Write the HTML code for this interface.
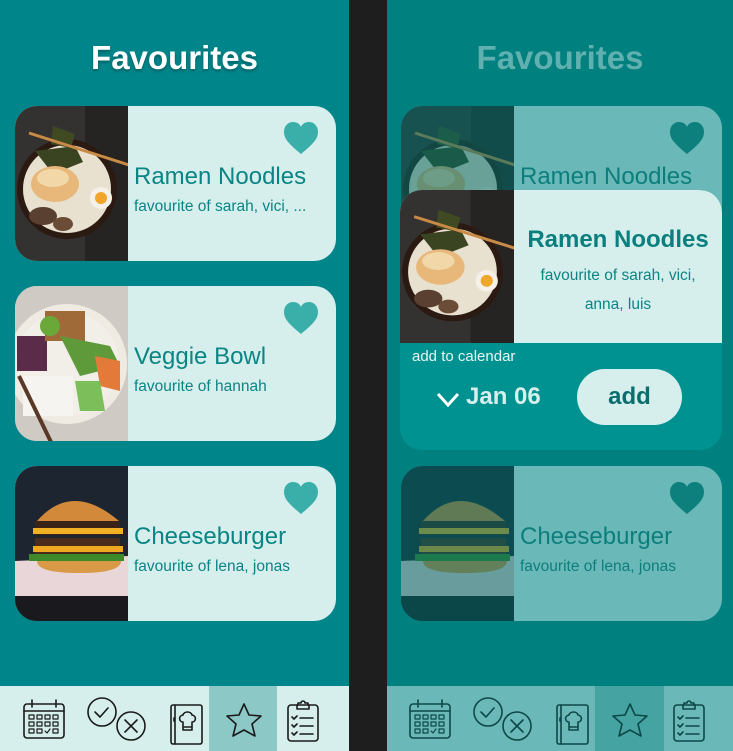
<!DOCTYPE html>
<html><head><meta charset="utf-8"><style>
*{margin:0;padding:0;box-sizing:border-box}
body{width:733px;height:751px;overflow:hidden;background:#1e1e1e;font-family:"Liberation Sans",sans-serif;position:relative}
.panel{position:absolute;top:0;height:751px}
#L{left:0;width:349px;background:#00868a}
#R{left:387px;width:346px;background:#00807f}
h1{position:absolute;top:39px;width:100%;text-align:center;font-size:33px;font-weight:bold;color:#fff;text-shadow:0 2px 3px rgba(0,0,0,.3)}
.card{position:absolute;width:321px;height:155px;border-radius:22px;background:#d6efed;overflow:hidden}
.card .img{position:absolute;left:0;top:0;width:113px;height:155px}
.card .t{position:absolute;left:119px;top:57px;font-size:24px;color:#0a8584;white-space:nowrap}
.card .s{position:absolute;left:119px;top:92px;font-size:15.5px;color:#0a8584;white-space:nowrap}
.card .h{position:absolute;left:268px;top:16px}
.nav{position:absolute;left:0;top:686px;width:100%;height:65px;background:#d6efed}
.dim{background:#6ab8b7}
.dim .t,.dim .s{color:#0c7f7d}
.shade{position:absolute;inset:0;background:rgba(0,110,108,.55)}
</style></head><body>
<svg width="0" height="0" style="position:absolute">
<defs>
<g id="ramen">
<rect width="113" height="155" fill="#343230"/>
<rect x="70" width="43" height="155" fill="#262422"/>
<circle cx="52" cy="83" r="50" fill="#2b1a12"/>
<circle cx="52" cy="83" r="44" fill="#e9e1cf"/>
<path d="M38 20l22 8-4 14-20-4z" fill="#3f4a22"/>
<path d="M20 45l40-5 8 16-30 12z" fill="#3a4420"/>
<ellipse cx="40" cy="78" rx="24" ry="18" fill="#e7b87a"/>
<ellipse cx="38" cy="72" rx="16" ry="9" fill="#f2d8a8"/>
<circle cx="86" cy="92" r="11" fill="#f5f1e8"/><circle cx="86" cy="92" r="6" fill="#f0a62a"/>
<ellipse cx="28" cy="110" rx="14" ry="9" fill="#5a4030"/><ellipse cx="48" cy="118" rx="10" ry="7" fill="#6b4c36"/>
<path d="M14 27l100 32" stroke="#c98a45" stroke-width="3"/>
</g>
<g id="bowl">
<rect width="113" height="155" fill="#cfcac4"/>
<circle cx="52" cy="78" r="60" fill="#efeae2"/>
<circle cx="52" cy="78" r="52" fill="#f2efe9"/>
<path d="M2 50l30 0 0 35-30 0z" fill="#5a2c4a"/>
<path d="M30 25h40v30h-40z" fill="#a06a38"/>
<circle cx="35" cy="40" r="10" fill="#6aa83a"/>
<path d="M45 50l50 10 10 20-40 10z" fill="#5e9a3a"/>
<path d="M80 70l25 5 0 30-20-5z" fill="#e47a3a"/>
<path d="M60 95l25 0 5 30-25 0z" fill="#7cbf5a"/>
<path d="M8 90h50v40h-50z" fill="#f5f4f0"/>
<path d="M4 90l32 66" stroke="#5a3826" stroke-width="4"/>
</g>
<g id="burger">
<rect width="113" height="155" fill="#1c2530"/>
<rect y="100" width="113" height="55" fill="#1a1a1e"/>
<path d="M0 95l113-5 0 40-113 0z" fill="#e8d6d8"/>
<path d="M22 55q35-40 82 0z" fill="#d28a3a"/>
<rect x="20" y="55" width="85" height="14" fill="#3a2418"/>
<rect x="18" y="62" width="90" height="6" fill="#f2b024"/>
<rect x="20" y="72" width="85" height="16" fill="#4a2c1c"/>
<rect x="18" y="80" width="90" height="6" fill="#f0a820"/>
<rect x="14" y="88" width="95" height="7" fill="#3e8a2a"/>
<path d="M22 95h84q0 12-42 12t-42-12z" fill="#d99a48"/>
</g>
<path id="heart" d="M18 32C6 22 1 17 1 10 1 4 5 0 10 0c4 0 7 2 8 5 1-3 4-5 8-5 5 0 9 4 9 10 0 7-5 12-17 22z"/>
<g id="icons" fill="none" stroke-width="1.6" stroke-linecap="round" stroke-linejoin="round">
<g transform="translate(24,13)">
<rect x="0" y="5" width="40" height="34" rx="3"/><path d="M0 12h40M8 1v7M32 1v7"/>
<g stroke-width="1.2"><rect x="5" y="16" width="5" height="4"/><rect x="13" y="16" width="5" height="4"/><rect x="21" y="16" width="5" height="4"/><rect x="29" y="16" width="5" height="4"/><rect x="5" y="23" width="5" height="4"/><rect x="13" y="23" width="5" height="4"/><rect x="21" y="23" width="5" height="4"/><rect x="29" y="23" width="5" height="4"/><rect x="5" y="30" width="5" height="4"/><rect x="13" y="30" width="5" height="4"/><path d="M21 32l2 2 3-4"/><rect x="29" y="30" width="5" height="4"/></g>
</g>
<g transform="translate(88,12)"><circle cx="14" cy="14" r="14"/><path d="M7 14l5 5 8-9"/><circle cx="43" cy="28" r="14"/><path d="M37 22l12 12M49 22l-12 12"/></g>
<g transform="translate(171,18)"><rect x="0" y="1" width="31" height="39" rx="2"/><path d="M4 1v39M3 14v3"/><path d="M12 26v-8c-4 0-5-6 0-7 1-4 8-4 9 0 5 1 4 7 0 7v8zM12 23h9"/></g>
<path transform="translate(226,17)" d="M18 1l5 11 12 1-9 8 3 12-11-6-11 6 3-12-9-8 12-1z"/>
<g transform="translate(288,13)"><rect x="0" y="6" width="30" height="36" rx="3"/><path d="M10 6v-2h3a2 2 0 0 1 4 0h3v2M9 6v4h12v-4"/><path d="M4 18l2 2 3-3M12 19h13M4 26l2 2 3-3M12 27h13M4 34l2 2 3-3M12 35h13"/></g>
</g>
</defs></svg>

<div class="panel" id="L">
<h1>Favourites</h1>
<div class="card" style="left:15px;top:106px"><svg class="img" viewBox="0 0 113 155"><use href="#ramen"/></svg><div class="t">Ramen Noodles</div><div class="s">favourite of sarah, vici, ...</div><svg class="h" width="36" height="33"><use href="#heart" fill="#3aafaa"/></svg></div>
<div class="card" style="left:15px;top:286px"><svg class="img" viewBox="0 0 113 155"><use href="#bowl"/></svg><div class="t">Veggie Bowl</div><div class="s">favourite of hannah</div><svg class="h" width="36" height="33"><use href="#heart" fill="#3aafaa"/></svg></div>
<div class="card" style="left:15px;top:466px"><svg class="img" viewBox="0 0 113 155"><use href="#burger"/></svg><div class="t">Cheeseburger</div><div class="s">favourite of lena, jonas</div><svg class="h" width="36" height="33"><use href="#heart" fill="#3aafaa"/></svg></div>
<div class="nav"><div style="position:absolute;left:209px;top:0;width:68px;height:65px;background:#8cc8c6"></div><svg width="349" height="65" style="position:absolute;left:0;top:0"><use href="#icons" stroke="#1a1a1a"/></svg></div>
</div>

<div class="panel" id="R">
<h1 style="color:#5fb0ae;text-shadow:none">Favourites</h1>
<div class="card dim" style="left:14px;top:106px"><svg class="img" viewBox="0 0 113 155"><use href="#ramen"/></svg><div class="shade" style="width:113px"></div><div class="t">Ramen Noodles</div><svg class="h" width="36" height="33"><use href="#heart" fill="#0d7f7d"/></svg></div>
<div class="card dim" style="left:14px;top:466px"><svg class="img" viewBox="0 0 113 155"><use href="#burger"/></svg><div class="shade" style="width:113px"></div><div class="t">Cheeseburger</div><div class="s">favourite of lena, jonas</div><svg class="h" width="36" height="33"><use href="#heart" fill="#0d7f7d"/></svg></div>
<div style="position:absolute;left:13px;top:190px;width:322px;height:260px;border-radius:22px;background:#009290;overflow:hidden">
<div style="position:absolute;left:0;top:0;width:322px;height:153px;background:#d6efed;border-top-right-radius:22px"></div>
<svg style="position:absolute;left:0;top:0" width="114" height="153" viewBox="0 0 113 155" preserveAspectRatio="none"><use href="#ramen"/></svg>
<div style="position:absolute;left:114px;width:208px;top:36px;text-align:center;font-size:24px;font-weight:bold;color:#0a7f7e">Ramen Noodles</div>
<div style="position:absolute;left:114px;width:208px;top:71px;text-align:center;font-size:15.5px;line-height:29px;color:#0a8584">favourite of sarah, vici,<br>anna, luis</div>
<div style="position:absolute;left:12px;top:158px;font-size:15px;color:#e6f6f4">add to calendar</div>
<svg style="position:absolute;left:36px;top:201px" width="24" height="18"><path d="M2 3l10 11 10-11" fill="none" stroke="#fff" stroke-width="3"/></svg>
<div style="position:absolute;left:66px;top:193px;font-size:24px;font-weight:bold;color:#d6efed">Jan 06</div>
<div style="position:absolute;left:177px;top:179px;width:105px;height:56px;border-radius:28px;background:#d6efed;text-align:center;line-height:56px;font-size:24px;font-weight:bold;color:#0a6e6c">add</div>
</div>
<div class="nav" style="background:#6ab8b7"><div style="position:absolute;left:208px;top:0;width:69px;height:65px;background:#45a3a2"></div><svg width="346" height="65" style="position:absolute;left:-1px;top:0"><use href="#icons" stroke="#0d4848"/></svg></div>
</div>
</body></html>
